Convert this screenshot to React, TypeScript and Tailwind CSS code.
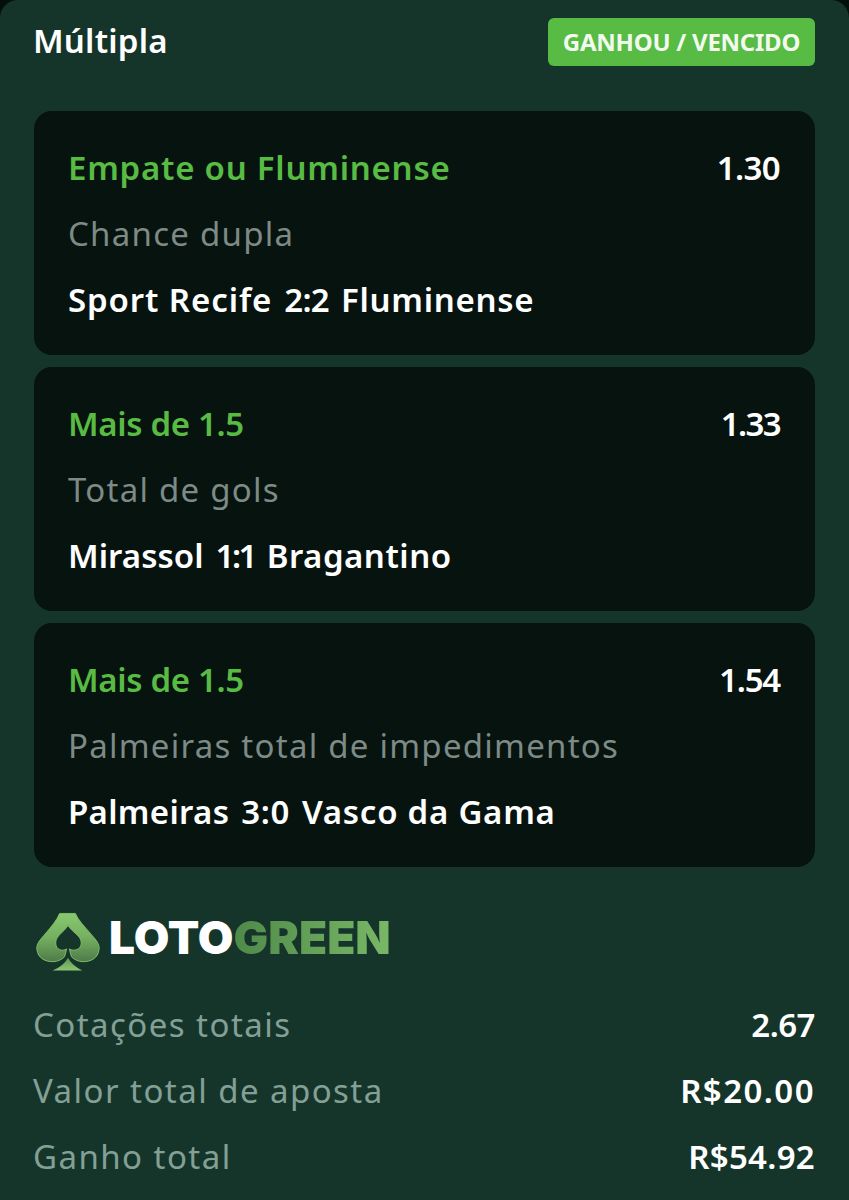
const F = "font-['Noto_Sans',sans-serif]";

const legs = [
  {
    pick: "Empate ou Fluminense", pt: "tracking-[0.75px]", odd: "1.30", ot: "tracking-[-0.6px]", market: "Chance dupla",
    a: "Sport Recife", at: "tracking-[0.9px]", s: "2:2", st: "tracking-[-0.7px]", b: "Fluminense", bt: "tracking-[0.7px]",
  },
  {
    pick: "Mais de 1.5", pt: "tracking-[-0.35px]", odd: "1.33", ot: "tracking-[-1.6px]", market: "Total de gols",
    a: "Mirassol", at: "tracking-[0.05px]", s: "1:1", st: "tracking-[-2.6px]", b: "Bragantino", bt: "tracking-[0.5px]",
  },
  {
    pick: "Mais de 1.5", pt: "tracking-[-0.35px]", odd: "1.54", ot: "tracking-[-1.2px]", market: "Palmeiras total de impedimentos",
    a: "Palmeiras", at: "tracking-[0.3px]", s: "3:0", st: "tracking-[0.6px]", b: "Vasco da Gama", bt: "tracking-[0.75px]",
  },
];

const totals = [
  ["Cotações totais", "2.67", "tracking-[-0.5px]"],
  ["Valor total de aposta", "R$20.00", "tracking-[1.45px]"],
  ["Ganho total", "R$54.92", "tracking-[0.3px]"],
];

function Spade() {
  return (
    <svg width="65" height="62" viewBox="0 0 66 62" className="ml-[1px] shrink-0">
      <defs>
        <linearGradient id="sp" x1="0" y1="0" x2="0" y2="1">
          <stop offset="0" stopColor="#8ac86f" />
          <stop offset="0.5" stopColor="#74b060" />
          <stop offset="1" stopColor="#4f7a49" />
        </linearGradient>
        <linearGradient id="tip" x1="0" y1="0" x2="0" y2="1">
          <stop offset="0" stopColor="#5f9552" />
          <stop offset="1" stopColor="#8cc673" />
        </linearGradient>
      </defs>
      <path
        fill="url(#sp)"
        stroke="#7dbd66"
        strokeWidth="1"
        d="M25 2 H41 C44 9 50 15 56 22 C62 29 66 33 65 39 C64 47 57 51 49 51 C44 51 40 49 37 46 C36 43 35.5 41 35 38 C39 41 47 39 47 32 C47 24 37 21 33.5 14 C30 21 21 24 21 32 C21 39 28 41 32 38 C31.5 41 31 43 30 46 C27 49 23 51 18 51 C10 51 3 47 2 39 C1 33 5 29 11 22 C17 15 22 9 25 2 Z"
      />
      <path fill="url(#tip)" d="M33.5 47 C36 52 42 57 48 60 H18 C25 57 31 52 33.5 47 Z" />
    </svg>
  );
}

export default function App() {
  return (
    <div className={`${F} w-[849px] h-[1200px] overflow-hidden bg-[#020f0b]`}>
      <div className="h-full rounded-t-[18px] bg-[#15352b] px-[34px]">
        <div className="flex h-[84px] items-center justify-between">
          <span className="-mt-[2px] -ml-[1px] text-[33px] font-semibold tracking-[0.2px] text-white">Múltipla</span>
          <span className="-mt-[1px] flex h-[48px] w-[267px] items-center justify-center rounded-[6px] bg-[#58bb43] text-[24px] font-bold tracking-[-0.25px] text-[#f2faef]">
            GANHOU / VENCIDO
          </span>
        </div>
        <div className="mt-[27px] flex flex-col gap-[12px]">
          {legs.map((l) => (
            <div key={l.market} className="h-[244px] rounded-[18px] bg-[#06130f] pr-[35px] pl-[34px] pt-[24px]">
              <div className="flex h-[66px] items-center justify-between text-[33px] font-semibold">
                <span className={`text-[#58bb43] ${l.pt}`}>{l.pick}</span>
                <span className={`text-white ${l.ot}`}>{l.odd}</span>
              </div>
              <div className="flex h-[66px] items-center text-[33px] tracking-[1.25px] text-[#7d8a86]">{l.market}</div>
              <div className="flex h-[66px] items-center gap-[12px] text-[33px] font-semibold text-white">
                <span className={l.at}>{l.a}</span>
                <span className={l.st}>{l.s}</span>
                <span className={l.bt}>{l.b}</span>
              </div>
            </div>
          ))}
        </div>
        <div className="mt-[44px] flex h-[62px] items-center">
          <Spade />
          <span className="mb-[10px] ml-[9px] font-['Inter',sans-serif] text-[46px] leading-none font-black text-white">LOTO</span>
          <span className="mb-[10px] bg-gradient-to-r from-[#4f8a4a] to-[#7ab866] bg-clip-text font-['Inter',sans-serif] text-[46px] leading-none font-black text-transparent">GREEN</span>
        </div>
        <div className="mt-[19px] flex flex-col">
          {totals.map(([k, v, t]) => (
            <div key={k} className="flex h-[66px] items-center justify-between text-[33px]">
              <span className="-ml-[1px] tracking-[1.45px] text-[#84a096]">{k}</span>
              <span className={`font-semibold text-white ${t}`}>{v}</span>
            </div>
          ))}
        </div>
      </div>
    </div>
  );
}
